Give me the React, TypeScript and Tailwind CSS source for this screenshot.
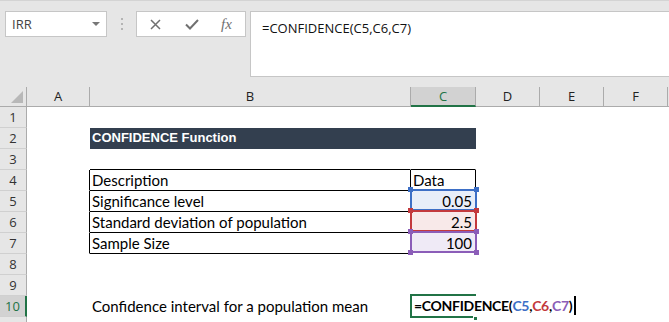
import type { ReactNode } from "react";

const W = {
  A: "w-[63px]",
  B: "w-[321px]",
  C: "w-[65px]",
  D: "w-[64px]",
};

function cell(width: string, right?: string, bottom?: string, extra = "") {
  return `${width} shrink-0 h-full border-r border-b ${right ?? "border-r-transparent"} ${bottom ?? "border-b-transparent"} ${extra}`;
}

function Toolbar() {
  return (
    <div className="h-[87px] shrink-0 bg-[#e6e6e6] border-t border-t-[#d4d4d4] flex items-start pl-[5px] pt-[10px] font-['Open_Sans',sans-serif]">
      {/* Name box */}
      <div className="w-[102px] h-[26px] bg-white border border-[#c6c6c6] flex items-center justify-between pl-[6px] pr-[6px]">
        <span className="text-[13px] text-[#444] leading-none">IRR</span>
        <span className="w-0 h-0 border-l-[4px] border-r-[4px] border-t-[4px] border-l-transparent border-r-transparent border-t-[#777]" />
      </div>

      {/* drag dots */}
      <div className="ml-[14px] h-[26px] flex flex-col justify-center gap-[3px]">
        <span className="w-[2px] h-[2px] bg-[#b4b4b4]" />
        <span className="w-[2px] h-[2px] bg-[#b4b4b4]" />
        <span className="w-[2px] h-[2px] bg-[#b4b4b4]" />
      </div>

      {/* cancel / enter / fx */}
      <div className="ml-[13px] w-[110px] h-[26px] bg-white border border-[#c6c6c6] flex items-center pl-[13px]">
        <svg width="11" height="11" viewBox="0 0 11 11">
          <path d="M1 1 L10 10 M10 1 L1 10" stroke="#707070" strokeWidth="1.5" fill="none" />
        </svg>
        <svg className="ml-[24px]" width="14" height="11" viewBox="0 0 14 11">
          <path d="M1 5.5 L5 9.5 L13 1" stroke="#707070" strokeWidth="2" fill="none" />
        </svg>
        <span className="ml-[22px] text-[15px] italic text-[#707070] font-['Liberation_Serif',serif] leading-none">fx</span>
      </div>

      {/* formula bar */}
      <div className="ml-[4px] flex-1 h-[66px] bg-white border border-r-0 border-[#c6c6c6] pl-[11px] pt-[3px]">
        <span className="text-[13px] text-[#111] leading-[18px]">=CONFIDENCE(C5,C6,C7)</span>
      </div>
    </div>
  );
}

function HeaderCell({ w, label, active }: { w: string; label: string; active?: boolean }) {
  return (
    <div
      className={`${w} shrink-0 h-full flex items-center justify-center border-r border-r-[#ababab] ${
        active ? "bg-[#d2d2d2] text-[#217346] border-b-2 border-b-[#217346]" : "border-b border-b-[#ababab] text-[#222]"
      }`}
    >
      {label}
    </div>
  );
}

function ColumnHeaders() {
  return (
    <div className="h-[20px] shrink-0 flex bg-[#e6e6e6] text-[13px] font-['Open_Sans',sans-serif] leading-none">
      <div className="w-[27px] shrink-0 h-full border-r border-b border-[#ababab] relative">
        <div className="absolute right-[3px] bottom-[3px] w-0 h-0 border-l-[12px] border-t-[12px] border-l-transparent border-t-transparent border-r-0 border-b-0 [border-bottom:12px_solid_#b8b8b8]" />
      </div>
      <HeaderCell w={W.A} label="A" />
      <HeaderCell w={W.B} label="B" />
      <HeaderCell w={W.C} label="C" active />
      <HeaderCell w={W.D} label="D" />
      <HeaderCell w={W.D} label="E" />
      <HeaderCell w={W.D} label="F" />
      <div className="flex-1 h-full border-b border-b-[#ababab]" />
    </div>
  );
}

type CellProps = { r?: string; b?: string; extra?: string; children?: ReactNode };

function Row({ n, active, a, b, c }: { n?: number; active?: boolean; a?: CellProps; b?: CellProps; c?: CellProps }) {
  return (
    <div className="h-[21px] shrink-0 flex">
      <div
        className={`w-[27px] shrink-0 h-full flex items-center justify-center text-[13px] font-['Open_Sans',sans-serif] leading-none border-b border-b-[#d0d0d0] ${
          active ? "bg-[#d2d2d2] text-[#217346] border-r-2 border-r-[#217346]" : "bg-[#e6e6e6] text-[#333] border-r border-r-[#ababab]"
        }`}
      >
        {n}
      </div>
      <div className={cell(W.A, a?.r, a?.b, a?.extra)}>{a?.children}</div>
      <div className={cell(W.B, b?.r, b?.b, b?.extra)}>{b?.children}</div>
      <div className={cell(W.C, c?.r, c?.b, c?.extra)}>{c?.children}</div>
      <div className={cell(W.D)} />
      <div className={cell(W.D)} />
      <div className={cell(W.D)} />
      <div className="flex-1" />
    </div>
  );
}

// coloured reference box drawn round a precedent cell, with corner handles
function RangeBox({ line, dot, fill, value }: { line: string; dot: string; fill: string; value: string }) {
  return (
    <div className={`relative h-full w-full ${fill} flex items-end justify-end pr-[3px] pb-[1px] text-[15px] leading-[18px]`}>
      {value}
      <div className={`absolute -left-px -right-[2px] -top-[2px] bottom-0 border-2 ${line}`} />
      <div className={`absolute -left-[3px] -top-[4px] w-[5px] h-[5px] ${dot}`} />
      <div className={`absolute -right-[4px] -top-[4px] w-[5px] h-[5px] ${dot}`} />
      <div className={`absolute -left-[3px] -bottom-[2px] w-[5px] h-[5px] ${dot}`} />
      <div className={`absolute -right-[4px] -bottom-[2px] w-[5px] h-[5px] ${dot}`} />
    </div>
  );
}

const txt = "h-full flex items-end pl-[2px] pb-[1px] text-[15px] leading-[18px] whitespace-nowrap";
const BLK = "border-r-black";
const BLKB = "border-b-black";

export default function App() {
  return (
    <div className="w-[669px] h-[322px] overflow-hidden bg-white flex flex-col font-['Lato',sans-serif] text-black">
      <Toolbar />
      <ColumnHeaders />

      <div className="flex-1 flex flex-col overflow-hidden">
        <Row n={1} />
        <Row
          n={2}
          b={{
            extra: "bg-[#333f4f]",
            children: (
              <div className="h-full flex items-center pl-[2px] text-[13px] font-bold text-white font-['Liberation_Sans',sans-serif]">
                CONFIDENCE Function
              </div>
            ),
          }}
          c={{ extra: "bg-[#333f4f]" }}
        />
        <Row n={3} b={{ b: BLKB }} c={{ b: BLKB }} />
        <Row
          n={4}
          a={{ r: BLK }}
          b={{ r: BLK, b: BLKB, children: <div className={txt}>Description</div> }}
          c={{ r: BLK, b: BLKB, children: <div className={txt}>Data</div> }}
        />
        <Row
          n={5}
          a={{ r: BLK }}
          b={{ r: BLK, b: BLKB, children: <div className={txt}>Significance level</div> }}
          c={{ children: <RangeBox line="border-[#3d6fc6]" dot="bg-[#3d6fc6]" fill="bg-[#e8eef9]" value="0.05" /> }}
        />
        <Row
          n={6}
          a={{ r: BLK }}
          b={{ r: BLK, b: BLKB, children: <div className={txt}>Standard deviation of population</div> }}
          c={{ children: <RangeBox line="border-[#c3393d]" dot="bg-[#c3393d]" fill="bg-[#f8e9e9]" value="2.5" /> }}
        />
        <Row
          n={7}
          a={{ r: BLK }}
          b={{ r: BLK, b: BLKB, children: <div className={txt}>Sample Size</div> }}
          c={{ children: <RangeBox line="border-[#8b5db8]" dot="bg-[#8b5db8]" fill="bg-[#efeaf6]" value="100" /> }}
        />
        <Row n={8} />
        <Row n={9} />
        <Row
          n={10}
          active
          b={{ children: <div className={txt}>Confidence interval for a population mean</div> }}
          c={{
            children: (
              <div className="relative h-full w-full">
                <div className="absolute -left-px -top-[2px] -bottom-[2px] -right-px border-2 border-[#217346]" />
                <div className="absolute left-[1px] top-0 bottom-0 bg-white z-10 flex items-end pl-[2px] pr-[2px] pb-[1px] text-[14px] tracking-[-0.3px] leading-[18px] font-bold whitespace-nowrap">
                  <span>=CONFIDENCE(</span>
                  <span className="text-[#3d6fc6]">C5</span>
                  <span>,</span>
                  <span className="text-[#c3393d]">C6</span>
                  <span>,</span>
                  <span className="text-[#8b5db8]">C7</span>
                  <span>)</span>
                  <span className="ml-[2px] w-[2px] h-[19px] bg-black" />
                </div>
                <div className="absolute -right-[3px] -bottom-[5px] w-[5px] h-[5px] bg-[#217346] border border-white z-20" />
              </div>
            ),
          }}
        />
        <Row />
      </div>
    </div>
  );
}
